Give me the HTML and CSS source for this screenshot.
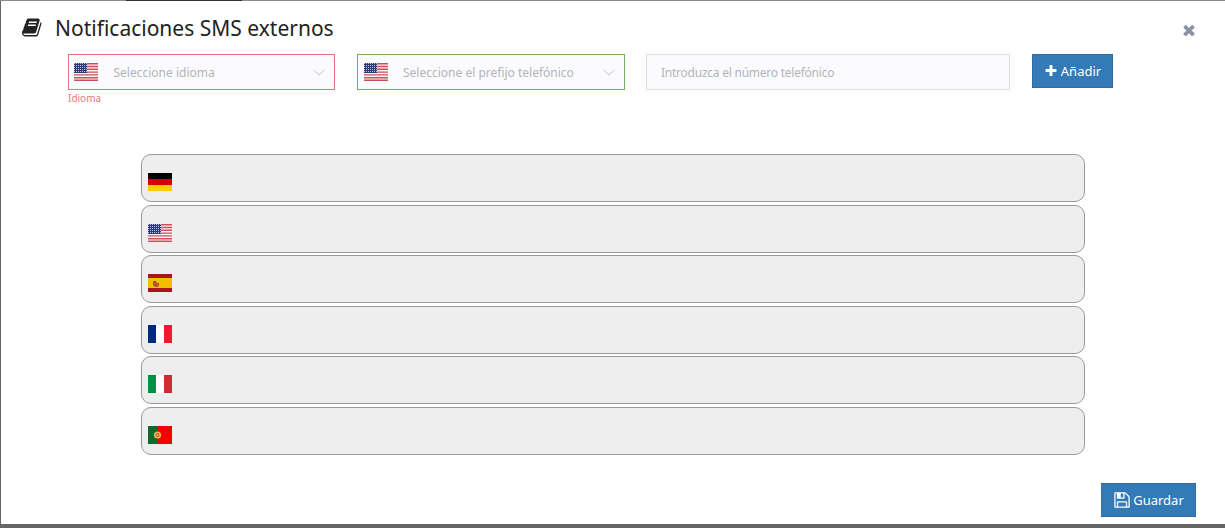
FILE: index.html
```html
<!DOCTYPE html>
<html lang="es">
<head>
<meta charset="utf-8">
<title>Notificaciones SMS externos</title>
<link rel="stylesheet" href="styles.css">
</head>
<body>
<svg class="defs" width="0" height="0" aria-hidden="true">
  <defs>
    <pattern id="stars" width="2" height="2" patternUnits="userSpaceOnUse">
      <rect width="2" height="2" fill="#2b3a78"/>
      <rect width="1" height="1" fill="#b9c0dc"/>
    </pattern>
    <symbol id="flag-us" viewBox="0 0 24 18">
      <rect width="24" height="18" fill="#fdf3f3"/>
      <path fill="#c9505f" d="M0 0h24v1.4H0zM0 2.8h24v1.4H0zM0 5.6h24v1.4H0zM0 8.4h24v1.4H0zM0 11.2h24v1.4H0zM0 14h24v1.4H0zM0 16.6h24V18H0z"/>
      <rect width="13" height="10" fill="url(#stars)"/>
    </symbol>
    <symbol id="flag-de" viewBox="0 0 24 18">
      <rect width="24" height="6" fill="#000"/>
      <rect y="6" width="24" height="6" fill="#d80000"/>
      <rect y="12" width="24" height="6" fill="#ffce00"/>
    </symbol>
    <symbol id="flag-es" viewBox="0 0 24 18">
      <rect width="24" height="18" fill="#aa151b"/>
      <rect y="4" width="24" height="10" fill="#f1bf00"/>
      <path fill="#b5562a" d="M5 7h3l1 2h2v2.500L9.500 13H7L5 11.500z"/>
    </symbol>
    <symbol id="flag-fr" viewBox="0 0 24 18">
      <rect width="8" height="18" fill="#002a7f"/>
      <rect x="8" width="8" height="18" fill="#fff"/>
      <rect x="16" width="8" height="18" fill="#f31830"/>
    </symbol>
    <symbol id="flag-it" viewBox="0 0 24 18">
      <rect width="8" height="18" fill="#009246"/>
      <rect x="8" width="8" height="18" fill="#fff"/>
      <rect x="16" width="8" height="18" fill="#ce2b37"/>
    </symbol>
    <symbol id="flag-pt" viewBox="0 0 24 18">
      <rect width="24" height="18" fill="#f70000"/>
      <rect width="9.500" height="18" fill="#0b6b2d"/>
      <circle cx="9.500" cy="9" r="3.600" fill="#e2b84a"/>
      <circle cx="9.500" cy="9" r="1.900" fill="#d8473a"/>
      <circle cx="9.500" cy="9" r=".8" fill="#f4f4f4"/>
    </symbol>
  </defs>
</svg>

<div class="behind"><span class="behind-text"></span></div>

<main class="modal">
  <header class="modal-head">
    <svg class="icon-book" viewBox="0 0 1792 1792"><path d="M1639 478q40 57 18 129l-275 906q-19 64-76.500 107.500t-122.500 43.500h-923q-77 0-148.500-53.500t-99.500-131.500q-24-67-2-127 0-4 3-27t4-37q1-8-3-21.500t-3-19.500q2-11 8-21t16.500-23.500 16.500-23.500q23-38 45-91.500t30-91.500q3-10 .5-30t-.5-28q3-11 17-28t17-23q21-36 42-92t25-90q1-9-2.500-32t.5-28q4-13 22-30.500t22-22.500q19-26 42.500-84.500t27.500-96.500q1-8-3-25.500t-2-26.500q2-8 9-18t18-23 17-21q8-12 16.500-30.500t15-35 16-36 19.500-32 26.500-23.500 36-11.500 47.500 5.500l-1 3q38-9 51-9h761q74 0 114 56t18 130l-274 906q-36 119-71.500 153.500t-128.500 34.500h-869q-27 0-38 15-11 16-1 43 24 70 144 70h923q29 0 56-15.500t35-41.500l300-987q7-22 5-57 38 15 59 43zm-1064 2q-4 13 2 22.500t20 9.500h608q13 0 25.500-9.500t16.500-22.500l21-64q4-13-2-22.500t-20-9.500h-608q-13 0-25.500 9.500t-16.500 22.500zm-83 256q-4 13 2 22.500t20 9.500h608q13 0 25.500-9.500t16.500-22.500l21-64q4-13-2-22.500t-20-9.500h-608q-13 0-25.500 9.500t-16.500 22.500z"/></svg>
    <h1 class="modal-title">Notificaciones SMS externos</h1>
    <svg class="icon-close" viewBox="0 0 1792 1792"><path d="M1490 1322q0 40-28 68l-136 136q-28 28-68 28t-68-28l-294-294-294 294q-28 28-68 28t-68-28l-136-136q-28-28-28-68t28-68l294-294-294-294q-28-28-28-68t28-68l136-136q28-28 68-28t68 28l294 294 294-294q28-28 68-28t68 28l136 136q28 28 28 68t-28 68l-294 294 294 294q28 28 28 68z"/></svg>
  </header>

  <form class="form-row">
    <div class="field field-lang">
      <div class="select select-error">
        <svg class="flag flag-select"><use href="#flag-us"/></svg>
        <span class="placeholder">Seleccione idioma</span>
        <svg class="chevron" viewBox="0 0 12 7"><path d="M.5.8 6 6l5.500-5.200"/></svg>
      </div>
      <span class="error-text">Idioma</span>
    </div>
    <div class="field field-prefix">
      <div class="select select-ok">
        <svg class="flag flag-select"><use href="#flag-us"/></svg>
        <span class="placeholder">Seleccione el prefijo telefónico</span>
        <svg class="chevron" viewBox="0 0 12 7"><path d="M.5.8 6 6l5.500-5.200"/></svg>
      </div>
    </div>
    <div class="field field-phone">
      <div class="input"><span class="placeholder">Introduzca el número telefónico</span></div>
    </div>
    <button class="btn btn-add" type="button">
      <svg class="icon-plus" viewBox="0 0 1792 1792"><path d="M1600 736v192q0 40-28 68t-68 28h-416v416q0 40-28 68t-68 28h-192q-40 0-68-28t-28-68v-416h-416q-40 0-68-28t-28-68v-192q0-40 28-68t68-28h416v-416q0-40 28-68t68-28h192q40 0 68 28t28 68v416h416q40 0 68 28t28 68z"/></svg>Añadir
    </button>
  </form>

  <section class="lang-list">
    <div class="lang-row"><svg class="flag"><use href="#flag-de"/></svg></div>
    <div class="lang-row"><svg class="flag"><use href="#flag-us"/></svg></div>
    <div class="lang-row"><svg class="flag"><use href="#flag-es"/></svg></div>
    <div class="lang-row"><svg class="flag"><use href="#flag-fr"/></svg></div>
    <div class="lang-row"><svg class="flag"><use href="#flag-it"/></svg></div>
    <div class="lang-row"><svg class="flag"><use href="#flag-pt"/></svg></div>
  </section>

  <footer class="modal-foot">
    <button class="btn btn-save" type="button">
      <svg class="icon-save" viewBox="0 0 1792 1792"><path d="M512 1536h768v-384h-768v384zm896 0h128v-896q0-14-10-38.500t-20-34.500l-281-281q-10-10-34-20t-39-10v416q0 40-28 68t-68 28h-576q-40 0-68-28t-28-68v-416h-128v1280h128v-416q0-40 28-68t68-28h832q40 0 68 28t28 68v416zm-384-928v-320q0-13-9.500-22.500t-22.500-9.500h-192q-13 0-22.500 9.500t-9.500 22.500v320q0 13 9.500 22.500t22.500 9.500h192q13 0 22.500-9.500t9.500-22.500zm640 32v928q0 40-28 68t-68 28h-1344q-40 0-68-28t-28-68v-1344q0-40 28-68t68-28h928q40 0 88 20t76 48l280 280q28 28 48 76t20 88z"/></svg>Guardar
    </button>
  </footer>
</main>
</body>
</html>
```
FILE: styles.css
```css
* { box-sizing: border-box; }
html, body { margin: 0; height: 100%; }
body {
  background: #666;
  font-family: "Noto Sans", "Open Sans", sans-serif;
  overflow: hidden;
}
.defs { position: absolute; }
.behind {
  height: 1px;
  background: #8a8a8a;
  padding-left: 126px;
}
.behind-text { display: block; width: 116px; height: 1px; background: #333; }

.modal {
  display: flex;
  flex-direction: column;
  height: 523px;
  margin-left: 1px;
  background: #fff;
}
.modal-head {
  display: flex;
  align-items: center;
  height: 53px;
  padding: 0 28px 0 21px;
}
.icon-book { width: 21px; height: 21px; fill: #222; margin-right: 12px; margin-top: -1px; flex: none; }
.modal-title {
  margin: 0;
  flex: 1;
  font-size: 21px;
  font-weight: 400;
  line-height: 54px;
  color: #222;
}
.icon-close { width: 16px; height: 16px; fill: #8b93a3; stroke: #8b93a3; stroke-width: 60; margin-top: 4px; }

.form-row {
  display: flex;
  align-items: flex-start;
  padding-left: 67px;
  height: 100px;
}
.field { display: flex; flex-direction: column; }
.field-lang { width: 267px; margin-right: 22px; }
.field-prefix { width: 268px; margin-right: 21px; }
.field-phone { width: 364px; margin-right: 22px; }
.select, .input {
  display: flex;
  align-items: center;
  height: 36px;
  background: #fbfbfe;
  border: 1px solid #ddd;
}
.select-error { border-color: #dd7676; }
.select-ok { border-color: #74b158; }
.input { padding-left: 14px; }
.flag { display: block; width: 24px; height: 18px; flex: none; }
.flag-select { margin-left: 6px; margin-right: 15px; }
.select-error .flag-select { margin-left: 5px; margin-right: 15.500px; }
.placeholder { flex: 1; font-size: 12px; letter-spacing: -.02em; color: #b0b4bb; white-space: nowrap; }
.select .placeholder { letter-spacing: 0; }
.chevron {
  width: 12px;
  height: 7px;
  margin-right: 9px;
  fill: none;
  stroke: #c0c4ca;
  stroke-width: 1;
}
.error-text { margin-top: 1px; font-size: 10px; line-height: 14px; color: #e27a7a; }

.btn {
  display: inline-flex;
  align-items: center;
  justify-content: center;
  height: 34px;
  padding: 0;
  background: #337ab7;
  border: 1px solid #2e6da4;
  color: #fff;
  font-family: inherit;
  font-size: 13px;
}
.btn-add { width: 81px; }
.icon-plus { width: 14px; height: 14px; fill: #fff; margin-right: 3px; }

.lang-list {
  display: flex;
  flex-direction: column;
  gap: 2.500px;
  width: 944px;
  margin-left: 140px;
}
.lang-row {
  display: flex;
  align-items: flex-end;
  height: 48px;
  padding: 0 0 10px 6px;
  background: #eee;
  border: 1px solid #999;
  border-radius: 10px;
}
.modal-foot {
  display: flex;
  justify-content: flex-end;
  margin-top: 28px;
  padding-right: 29px;
}
.btn-save { width: 95px; }
.icon-save { width: 18px; height: 18px; fill: #fff; margin-right: 2px; }
```
